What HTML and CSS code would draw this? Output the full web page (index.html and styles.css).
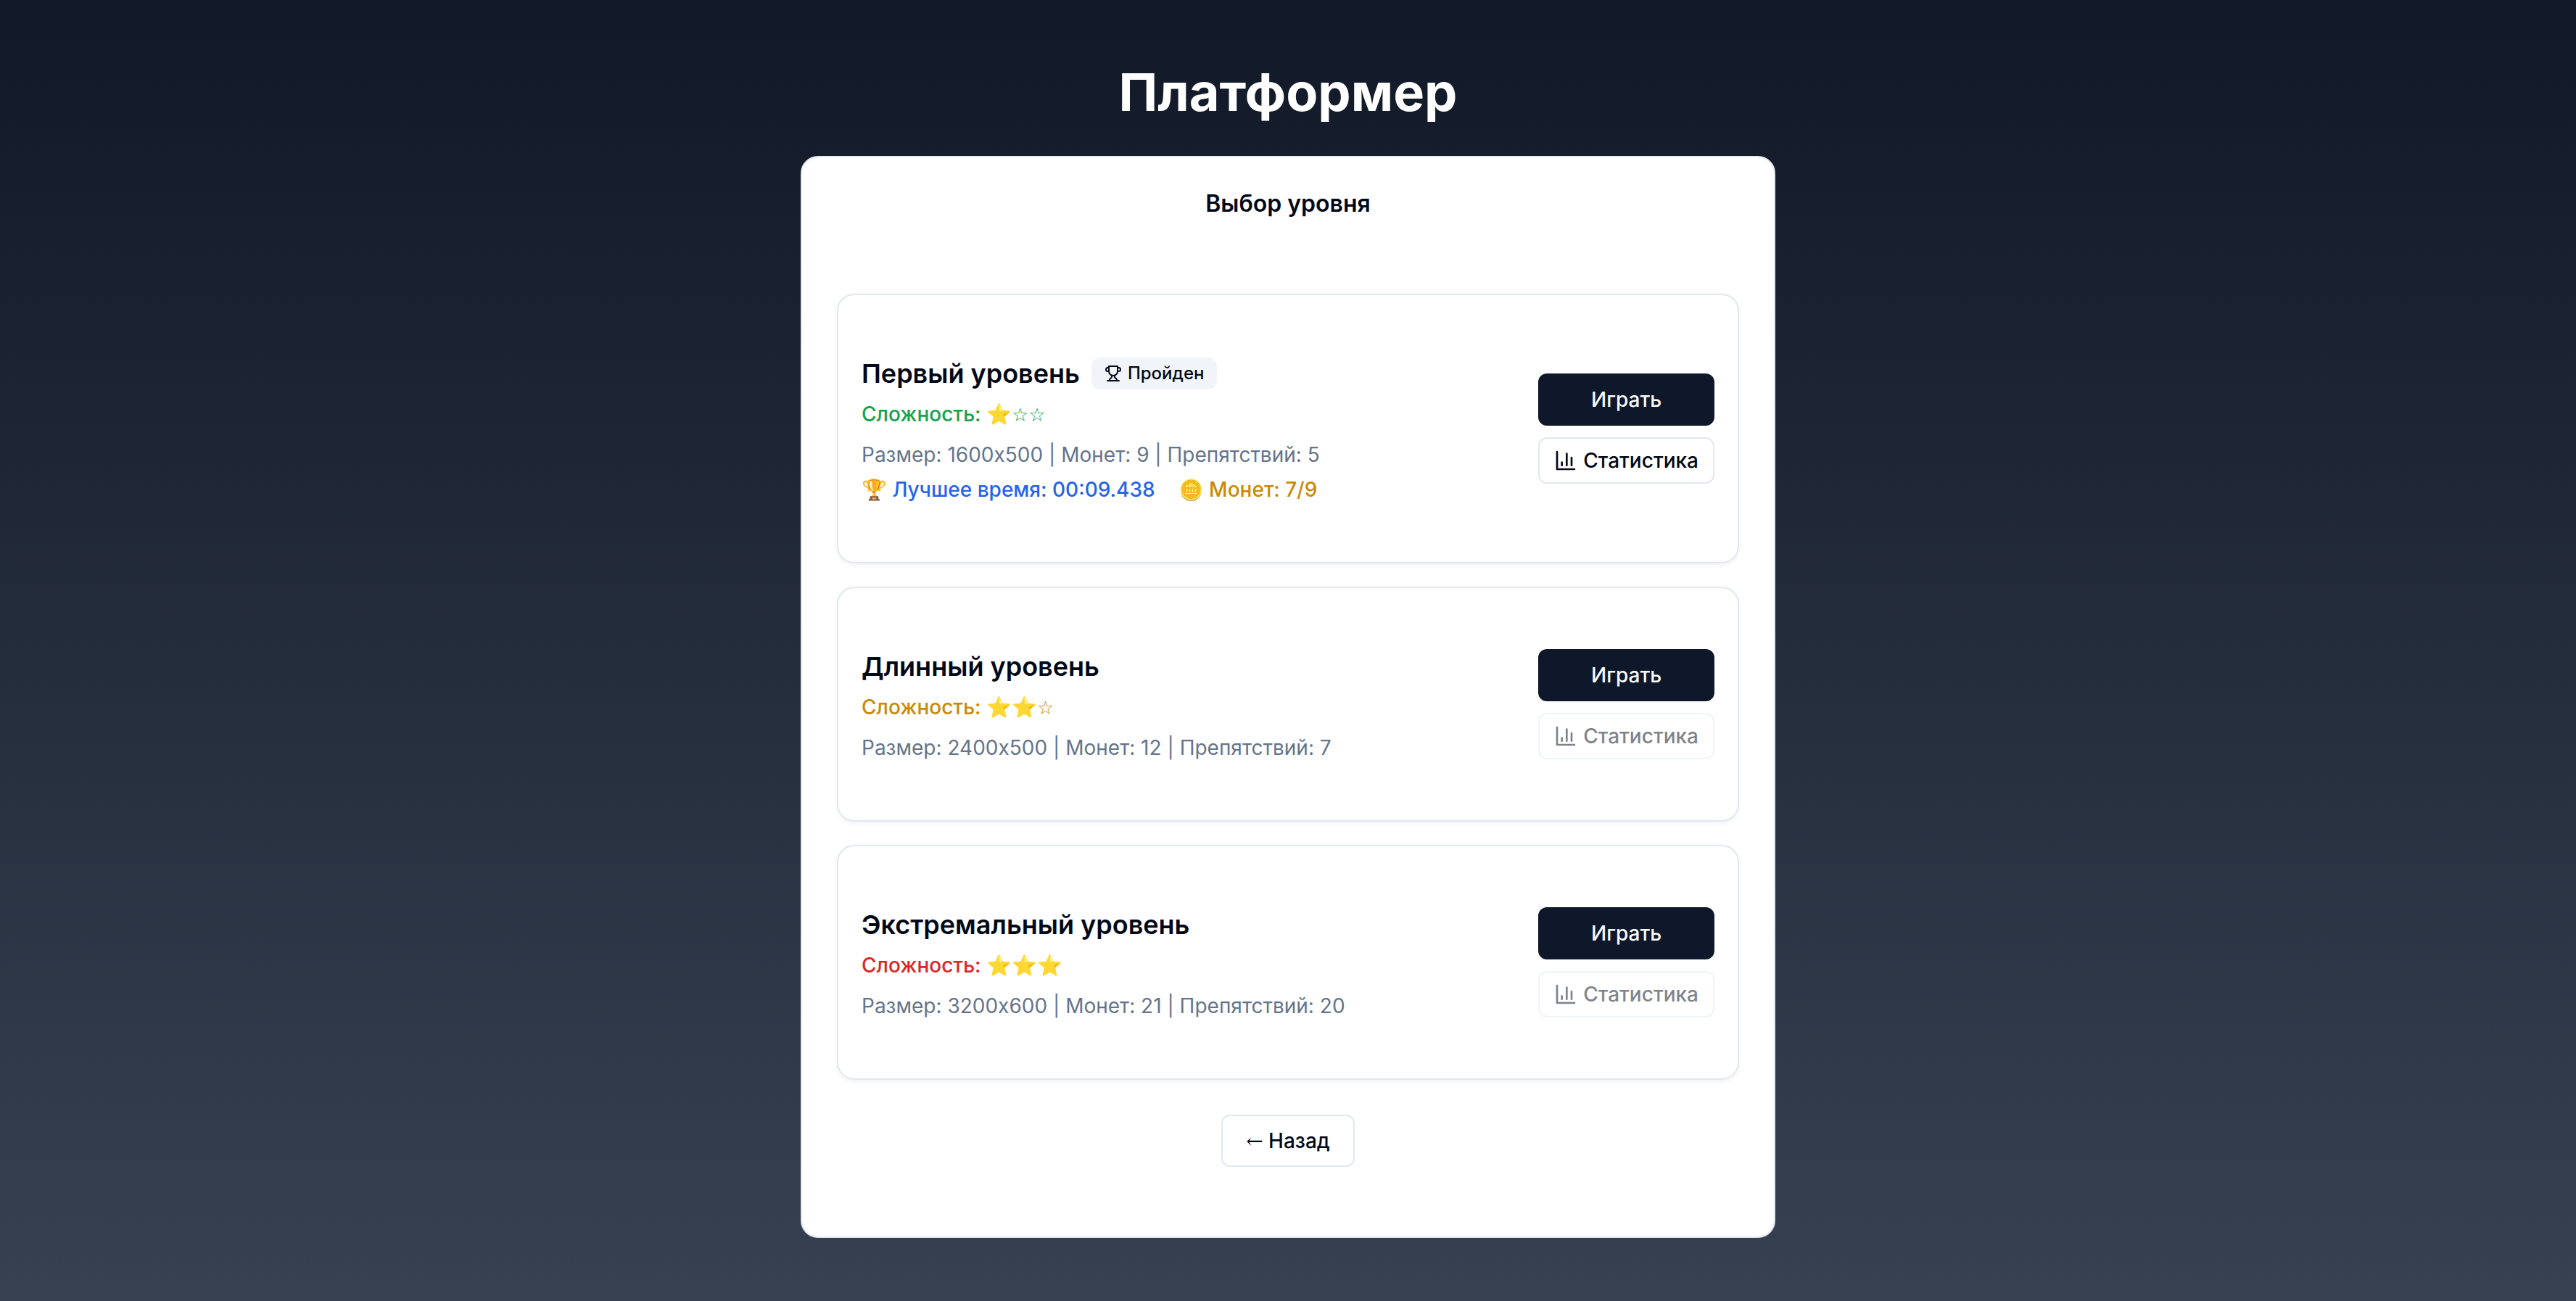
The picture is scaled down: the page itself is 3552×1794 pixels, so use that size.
FILE: index.html
```html
<!DOCTYPE html>
<html lang="ru">
<head>
<meta charset="utf-8">
<meta name="viewport" content="width=device-width, initial-scale=1">
<title>Платформер</title>
<link rel="stylesheet" href="styles.css">
</head>
<body>
<svg class="sprite" aria-hidden="true">
  <symbol id="icon-chart" viewBox="0 0 24 24"><path d="M3 3v18h18"/><path d="M18 17V9"/><path d="M13 17V5"/><path d="M8 17v-3"/></symbol>
  <symbol id="icon-trophy" viewBox="0 0 24 24"><path d="M6 9H4.500a2.500 2.500 0 0 1 0-5H6"/><path d="M18 9h1.500a2.500 2.500 0 0 0 0-5H18"/><path d="M4 22h16"/><path d="M10 14.660V17c0 .55-.47.98-.97 1.210C7.850 18.750 7 20.240 7 22"/><path d="M14 14.660V17c0 .55.47.98.97 1.210C16.150 18.750 17 20.240 17 22"/><path d="M18 2H6v7a6 6 0 0 0 12 0V2Z"/></symbol>
</svg>
<main class="page">
  <h1 class="page-title">Платформер</h1>
  <section class="panel">
    <h2 class="panel-title">Выбор уровня</h2>
    <div class="levels">
      <article class="level">
        <div class="level-info">
          <div class="level-head">
            <h3 class="level-name">Первый уровень</h3>
            <span class="badge"><svg class="badge-icon" aria-hidden="true"><use href="#icon-trophy"/></svg>Пройден</span>
          </div>
          <p class="difficulty easy">Сложность: ⭐<span class="empty-stars">☆☆</span></p>
          <p class="details">Размер: 1600x500 | Монет: 9 | Препятствий: 5</p>
          <div class="records">
            <span class="best-time">🏆 Лучшее время: 00:09.438</span>
            <span class="best-coins">🪙 Монет: 7/9</span>
          </div>
        </div>
        <div class="actions">
          <button class="button primary" type="button">Играть</button>
          <button class="button outline small" type="button"><svg class="button-icon" aria-hidden="true"><use href="#icon-chart"/></svg>Статистика</button>
        </div>
      </article>
      <article class="level">
        <div class="level-info">
          <div class="level-head">
            <h3 class="level-name">Длинный уровень</h3>
          </div>
          <p class="difficulty medium">Сложность: ⭐⭐<span class="empty-stars">☆</span></p>
          <p class="details">Размер: 2400x500 | Монет: 12 | Препятствий: 7</p>
        </div>
        <div class="actions">
          <button class="button primary" type="button">Играть</button>
          <button class="button outline small" type="button" disabled><svg class="button-icon" aria-hidden="true"><use href="#icon-chart"/></svg>Статистика</button>
        </div>
      </article>
      <article class="level">
        <div class="level-info">
          <div class="level-head">
            <h3 class="level-name">Экстремальный уровень</h3>
          </div>
          <p class="difficulty hard">Сложность: ⭐⭐⭐</p>
          <p class="details">Размер: 3200x600 | Монет: 21 | Препятствий: 20</p>
        </div>
        <div class="actions">
          <button class="button primary" type="button">Играть</button>
          <button class="button outline small" type="button" disabled><svg class="button-icon" aria-hidden="true"><use href="#icon-chart"/></svg>Статистика</button>
        </div>
      </article>
    </div>
    <div class="panel-footer">
      <button class="button outline" type="button"><span><span class="arrow">←</span> Назад</span></button>
    </div>
  </section>
</main>
</body>
</html>
```
FILE: styles.css
```css
*, *::before, *::after {
  box-sizing: border-box;
}

body {
  margin: 0;
  font-family: Inter, "Liberation Sans", sans-serif;
  font-size: 28px;
  line-height: 40px;
  color: #020817;
}

h1, h2, h3, p {
  margin: 0;
}

.sprite {
  position: absolute;
  width: 0;
  height: 0;
}

.page {
  min-height: 100vh;
  padding: 32px;
  display: flex;
  flex-direction: column;
  align-items: center;
  justify-content: center;
  background: linear-gradient(to bottom, #111827, #374151);
}

.page-title {
  margin-bottom: 48px;
  font-size: 72px;
  line-height: 80px;
  font-weight: 700;
  color: #fff;
}

.panel {
  width: 100%;
  max-width: 1344px;
  padding: 48px;
  background: #fff;
  border: 2px solid #e2e8f0;
  border-radius: 24px;
}

.panel-title {
  margin-bottom: 108px;
  font-size: 32px;
  line-height: 32px;
  font-weight: 600;
  text-align: center;
}

.levels {
  display: flex;
  flex-direction: column;
  gap: 32px;
}

.level {
  display: flex;
  align-items: center;
  justify-content: space-between;
  gap: 32px;
  padding: 80px 32px;
  border: 2px solid #e2e8f0;
  border-radius: 24px;
  box-shadow: 0 2px 6px rgb(0 0 0 / 6%);
}

.level-head {
  display: flex;
  align-items: center;
  gap: 16px;
  margin-bottom: 8px;
}

.level-name {
  font-size: 36px;
  line-height: 56px;
  font-weight: 600;
}

.badge {
  display: inline-flex;
  align-items: center;
  gap: 8px;
  padding: 6px 18px;
  font-size: 24px;
  line-height: 32px;
  font-weight: 500;
  background: #f1f5f9;
  border-radius: 12px;
}

.badge-icon,
.button-icon {
  flex: none;
  fill: none;
  stroke: currentColor;
  stroke-width: 2;
  stroke-linecap: round;
  stroke-linejoin: round;
}

.badge-icon {
  width: 24px;
  height: 24px;
}

.button-icon {
  width: 32px;
  height: 32px;
}

.difficulty {
  margin-bottom: 16px;
  font-weight: 500;
}

.empty-stars,
.arrow {
  line-height: 1;
}

.empty-stars {
  font-family: "DejaVu Sans", sans-serif;
  font-size: 26px;
}

.arrow {
  font-family: "DejaVu Serif", serif;
}

.easy {
  color: #16a34a;
}

.medium {
  color: #ca8a04;
}

.hard {
  color: #dc2626;
}

.details {
  color: #64748b;
}

.records {
  display: flex;
  gap: 32px;
  margin-top: 8px;
  font-weight: 500;
}

.best-time {
  color: #2563eb;
}

.best-coins {
  color: #ca8a04;
}

.actions {
  display: flex;
  flex-direction: column;
  gap: 16px;
}

.button {
  display: inline-flex;
  align-items: center;
  justify-content: center;
  gap: 8px;
  height: 72px;
  padding: 0 32px;
  border: 2px solid transparent;
  border-radius: 12px;
  font: inherit;
  font-weight: 500;
  white-space: nowrap;
}

.primary {
  color: #f8fafc;
  background: #0f172a;
  border-color: #0f172a;
}

.outline {
  color: #020817;
  background: #fff;
  border-color: #e2e8f0;
}

.small {
  height: 64px;
  padding: 0 20px;
}

.button:disabled {
  opacity: 0.5;
}

.panel-footer {
  display: flex;
  justify-content: center;
  padding: 48px 0;
}
```
